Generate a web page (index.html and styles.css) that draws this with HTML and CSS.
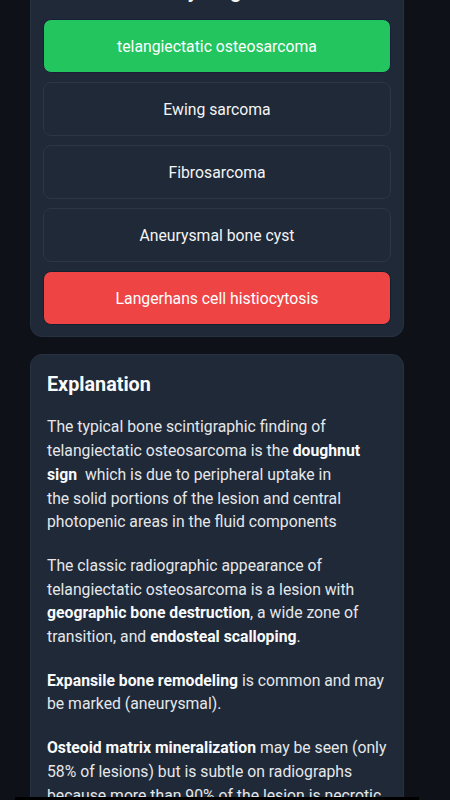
FILE: index.html
```html
<!DOCTYPE html>
<html lang="en">
<head>
<meta charset="utf-8">
<title>Quiz</title>
<link rel="stylesheet" href="styles.css">
</head>
<body>
<main class="page">
  <section class="card quiz">
    <h2 class="question">What is the likely diagnosis?</h2>
    <div class="options">
      <button class="option correct">telangiectatic osteosarcoma</button>
      <button class="option">Ewing sarcoma</button>
      <button class="option">Fibrosarcoma</button>
      <button class="option">Aneurysmal bone cyst</button>
      <button class="option wrong">Langerhans cell histiocytosis</button>
    </div>
  </section>
  <section class="card explanation">
    <h2 class="exp-title">Explanation</h2>
    <p>The typical bone scintigraphic finding of telangiectatic osteosarcoma is the <b>doughnut sign</b>&nbsp; which is due to peripheral uptake in<br>the solid portions of the lesion and central photopenic areas in the fluid components</p>
    <p>The classic radiographic appearance of telangiectatic osteosarcoma is a lesion with <b>geographic bone destruction</b>, a wide zone of transition, and <b>endosteal scalloping</b>.</p>
    <p><b>Expansile bone remodeling</b> is common and may be marked (aneurysmal).</p>
    <p><b>Osteoid matrix mineralization</b> may be seen (only 58% of lesions) but is subtle on radiographs because more than 90% of the lesion is necrotic and hemorrhagic.</p>
  </section>
</main>
<div class="navbar-edge"></div>
</body>
</html>
```
FILE: styles.css
```css
* { box-sizing: border-box; }
html, body { margin: 0; padding: 0; }
body {
  background: #0e1118;
  font-family: Roboto, "Noto Sans", Arial, sans-serif;
  color: #e5e7eb;
  overflow: hidden;
  height: 800px;
}
.page {
  width: 374px;
  margin-left: 30px;
  display: flex;
  flex-direction: column;
  gap: 16.5px;
}
.card {
  background: #1f2937;
  border: 1px solid #273142;
  border-radius: 12px;
}
.quiz {
  margin-top: -36px;
  padding: 12px 12px 11.5px;
}
.question {
  margin: 0 0 14px;
  font-size: 20px;
  line-height: 28px;
  font-weight: 700;
  color: #f3f4f6;
  padding-left: 2px;
}
.options {
  display: flex;
  flex-direction: column;
  gap: 8.6px;
}
.option {
  height: 54.3px;
  width: 100%;
  border-radius: 8px;
  border: 1px solid #2c3647;
  background: #1f2937;
  color: #f3f4f6;
  font-family: Roboto, "Noto Sans", Arial, sans-serif;
  font-size: 15.75px;
  line-height: 22px;
  padding: 2px 12px 0;
  text-align: center;
}
.option.correct {
  background: #22c55e;
  border-color: #1b1d3a;
  color: #ffffff;
}
.option.wrong {
  background: #ef4444;
  border-color: #12212f;
  color: #ffffff;
}
.explanation {
  padding: 16px 16px 16px;
}
.exp-title {
  margin: 0 0 16.5px;
  font-size: 19.75px;
  line-height: 28px;
  font-weight: 700;
  color: #f9fafb;
}
.explanation p {
  margin: 0 0 19.8px;
  font-size: 15.75px;
  line-height: 23.75px;
  color: #e5e7eb;
}
.explanation b {
  font-weight: 700;
  color: #f9fafb;
}
.navbar-edge {
  position: fixed;
  left: 15px;
  bottom: 0;
  width: 404px;
  height: 3px;
  background: #000;
}
```
